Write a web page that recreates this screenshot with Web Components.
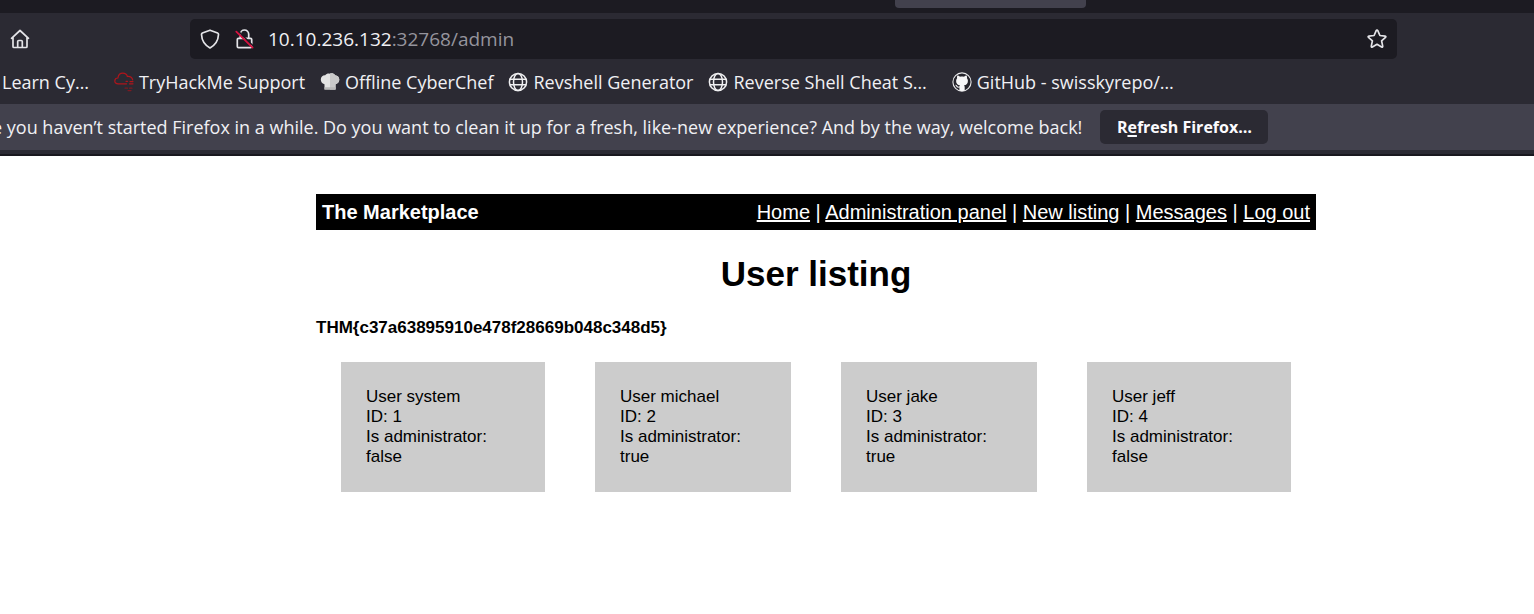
<!DOCTYPE html>
<html lang="en">
<head>
<meta charset="utf-8">
<title>The Marketplace</title>
<style>
  body { margin: 0; background: #fff; }
</style>
</head>
<body>
<browser-window>
  <tab-strip slot="chrome"></tab-strip>
  <address-bar slot="chrome"></address-bar>
  <bookmarks-bar slot="chrome">
    <bookmark-link icon="none">Learn Cy…</bookmark-link>
    <bookmark-link icon="cloud">TryHackMe Support</bookmark-link>
    <bookmark-link icon="chef">Offline CyberChef</bookmark-link>
    <bookmark-link icon="globe">Revshell Generator</bookmark-link>
    <bookmark-link icon="globe">Reverse Shell Cheat S…</bookmark-link>
    <bookmark-link icon="github" class="last">GitHub - swisskyrepo/…</bookmark-link>
  </bookmarks-bar>
  <notification-bar slot="chrome">e you haven’t started Firefox in a while. Do you want to clean it up for a fresh, like-new experience? And by the way, welcome back!</notification-bar>
  <market-page>
    <site-header></site-header>
    <user-listing>
      <user-card name="system" number="1" admin="false"></user-card>
      <user-card name="michael" number="2" admin="true"></user-card>
      <user-card name="jake" number="3" admin="true"></user-card>
      <user-card name="jeff" number="4" admin="false"></user-card>
    </user-listing>
  </market-page>
</browser-window>

<script>
const define = (name, render) => customElements.define(name, class extends HTMLElement {
  constructor() {
    super();
    this.attachShadow({ mode: 'open' });
  }
  connectedCallback() {
    this.shadowRoot.innerHTML = render(this);
  }
});

const icons = {
  none: '',
  cloud: `<svg viewBox="0 0 20 20" width="20" height="20" fill="none" stroke="#b0151b" stroke-width="1.2" stroke-linecap="round"><path d="M10 11.8H4.2C2 11.8.8 10.500.8 8.900.8 7.200 2.100 6 3.900 6 4.300 3 6.200 1.200 8.800 1.200c2.300 0 4 1.300 4.600 3.300 2.600-.2 4.700 1 5.300 3.400M12 9.300h1.500M16 9.600h3M10.500 11.800h2M15.500 11.800h3.500"/><path d="M11 16.200h2.500M15.500 16.200h2.500M14 18.600h3" stroke="#7c1a22"/></svg>`,
  chef: `<svg viewBox="0 0 20 20" width="20" height="20"><path d="M4.500 17.500V12.200C2 11.600.8 9.800.8 7.600c0-2.700 2-4.500 4.400-4.300C6.200 1.900 8 1.300 9.800 1.700c2-.8 4.300-.2 5.300 1.500 2.400.1 4.200 1.900 4.200 4.300 0 2.200-1.300 4-3.800 4.700v5.300z" fill="#e3e3e3"/><path d="M10 1.700c2-.7 4.200-.2 5.100 1.500 2.400.1 4.200 1.900 4.200 4.300 0 2.200-1.300 4-3.800 4.700v5.300H10z" fill="#c9c9c9"/><path d="M4.500 15.200h11v2.300h-11z" fill="#b9b9b9"/></svg>`,
  globe: `<svg viewBox="0 0 20 20" width="20" height="20" fill="none" stroke="#f0f0f2" stroke-width="1.500"><circle cx="10" cy="10" r="8.600"/><ellipse cx="10" cy="10" rx="4.500" ry="8.600"/><path d="M1.800 7.200h16.400M1.800 12.800h16.400"/></svg>`,
  github: `<svg viewBox="0 0 20 20" width="20" height="20"><circle cx="10" cy="10" r="9.100" fill="#25242c" stroke="#e8e8ea" stroke-width="1.100"/><path d="M7.400 18.500v-2.900c-2 .4-2.800-.4-3.300-1.600-.2-.4-.6-.8-1-1 .9-.4 1.600.1 2.100.8.600.9 1.200 1.100 2.200.8.100-.5.300-1 .6-1.300-2.500-.3-3.900-1.500-3.900-4.300 0-1.200.4-2 1-2.700-.2-.8-.2-1.700.2-2.700 1 0 1.900.5 2.700 1.100 1.300-.3 2.700-.3 4 0 .8-.6 1.700-1.100 2.700-1.100.4 1 .4 1.900.2 2.700.6.700 1 1.500 1 2.700 0 2.800-1.400 4-3.900 4.300.4.400.7 1.100.7 2v3.200c-1.700.8-3.600.8-5.300 0z" fill="#f7f7f8"/></svg>`
};

define('browser-window', () => `
  <style>
    :host { display: block; font-family: "Open Sans", "Noto Sans", sans-serif; color: #f0f0f4; }
    .chrome { background: #2b2a33; padding-bottom: 4px; border-bottom: 2px solid #19181e; }
  </style>
  <div class="chrome"><slot name="chrome"></slot></div>
  <slot></slot>`);

define('tab-strip', () => `
  <style>
    :host { display: grid; grid-template-columns: 895fr 191fr 448fr; height: 13px; background: #1c1b22; }
    .tab { grid-column: 2; height: 8px; background: #42414d; border-radius: 0 0 4px 4px; }
  </style>
  <div class="tab"></div>`);

define('address-bar', () => `
  <style>
    :host { display: flex; align-items: center; height: 51px; }
    button { display: block; border: 0; padding: 0; background: none; color: #e4e4e8; font: inherit; }
    svg { display: block; fill: none; stroke: currentColor; stroke-width: 1.7; stroke-linejoin: round; stroke-linecap: round; }
    .home { margin: 0 160px 0 10px; }
    .box { flex: 1; display: flex; align-items: center; height: 40px; box-sizing: border-box; margin-right: 137px; padding: 0 10px; background: #1c1b22; border-radius: 5px; }
    .lock { margin-left: 14px; }
    .url { flex: 1; margin-left: 13px; font-size: 19px; line-height: 26px; color: #95949d; white-space: nowrap; }
    .url b { font-weight: 400; color: #f0f0f4; }
  </style>
  <button class="home" aria-label="Home"><svg width="20" height="20" viewBox="0 0 20 20"><path d="M1.500 9.300 10 1.500l8.500 7.800M3 8.200v9.300q0 1 1 1h12q1 0 1-1V8.200M7.700 18.500v-6q0-1 1-1h2.600q1 0 1 1v6"/></svg></button>
  <div class="box">
    <button aria-label="Tracking protection"><svg width="20" height="20" viewBox="0 0 20 20"><path d="M10 1.200 17.600 4q1 .4.900 1.500C18.200 12 15 16.200 10 18.900 5 16.200 1.800 12 1.500 5.500 1.400 4.400 2.400 4 2.400 4z"/></svg></button>
    <button class="lock" aria-label="Connection not secure"><svg width="21" height="20" viewBox="0 0 21 20"><path d="M6.300 9V5.200a4.200 4.200 0 0 1 8.400 0V9M4.500 9.300h12q1.200 0 1.200 1.200v7q0 1.200-1.200 1.200h-12q-1.200 0-1.200-1.200v-7q0-1.200 1.200-1.200z"/><path d="M4.600 2.600 19 16.800" stroke="#1c1b22" stroke-width="1.500"/><path d="M2.300 2.600 18.600 18.600" stroke="#d8113f" stroke-width="1.800"/></svg></button>
    <div class="url"><b>10.10.236.132</b>:32768/admin</div>
    <button aria-label="Bookmark this page"><svg width="20" height="20" viewBox="0 0 20 20"><path d="M10 1.200q.6 0 .8.500l2.100 4.800 5.200.6q1.300.3.400 1.300l-3.900 3.500 1.100 5.200q.1 1.400-1.100.9L10 15.300 5.400 18q-1.200.5-1.100-.9l1.100-5.200L1.500 8.400q-.9-1 .4-1.300l5.200-.6 2.100-4.800q.2-.5.800-.5z"/></svg></button>
  </div>`);

define('bookmarks-bar', () => `
  <style>
    :host { display: flex; align-items: center; gap: 15px; height: 40px; padding: 0 0 4px 2px; box-sizing: border-box; overflow: hidden; }
    ::slotted(:first-child) { margin-right: 10px; }
    ::slotted(.last) { margin-left: 10px; }
  </style>
  <slot></slot>`);

define('bookmark-link', el => `
  <style>
    :host { display: block; flex: none; }
    a { display: flex; align-items: center; gap: 5px; color: inherit; text-decoration: none; font-size: 18px; line-height: 24px; white-space: nowrap; }
    svg { display: block; flex: none; }
  </style>
  <a href="#">${icons[el.getAttribute('icon')]}<slot></slot></a>`);

define('notification-bar', () => `
  <style>
    :host { display: flex; align-items: center; gap: 18px; height: 46px; background: #42414d; overflow: hidden; font-size: 18px; line-height: 24px; white-space: nowrap; }
    .message { margin-left: -8px; }
    button { height: 34px; width: 168px; padding: 0; border: 0; border-radius: 5px; background: #2b2a33; color: #fbfbfe; font: 700 16px/24px "Open Sans", "Noto Sans", sans-serif; }
    u { text-decoration-thickness: 2px; text-underline-offset: 2px; text-decoration-skip-ink: none; }
  </style>
  <span class="message"><slot></slot></span>
  <button>R<u>e</u>fresh Firefox…</button>`);

define('market-page', () => `
  <style>
    :host { display: block; padding: 38px 0 38px 98px; font-family: "Liberation Sans", Arial, sans-serif; color: #000; }
    main { max-width: 1000px; margin: 0 auto; }
  </style>
  <main><slot></slot></main>`);

define('site-header', () => `
  <style>
    :host { display: flex; justify-content: space-between; align-items: center; height: 36px; padding: 0 6px; background: #000; color: #fff; font-size: 20px; line-height: 24px; }
    a { color: inherit; }
  </style>
  <strong>The Marketplace</strong>
  <nav><a href="#">Home</a> | <a href="#">Administration panel</a> | <a href="#">New listing</a> | <a href="#">Messages</a> | <a href="#">Log out</a></nav>`);

define('user-listing', () => `
  <style>
    :host { display: block; font-size: 17px; line-height: 20px; }
    h1 { margin: 24px 0; font-size: 35px; line-height: 40px; text-align: center; }
    .cards { display: grid; grid-template-columns: 204fr 196fr 196fr 204fr; gap: 50px; margin: 24px 25px; }
    .flag { display: block; }
  </style>
  <h1>User listing</h1>
  <strong class="flag">THM{c37a63895910e478f28669b048c348d5}</strong>
  <div class="cards"><slot></slot></div>`);

define('user-card', el => `
  <style>
    :host { display: block; padding: 25px; background: #ccc; }
  </style>
  <div>User ${el.getAttribute('name')}</div>
  <div>ID: ${el.getAttribute('number')}</div>
  <div>Is administrator: ${el.getAttribute('admin')}</div>`);
</script>
</body>
</html>
